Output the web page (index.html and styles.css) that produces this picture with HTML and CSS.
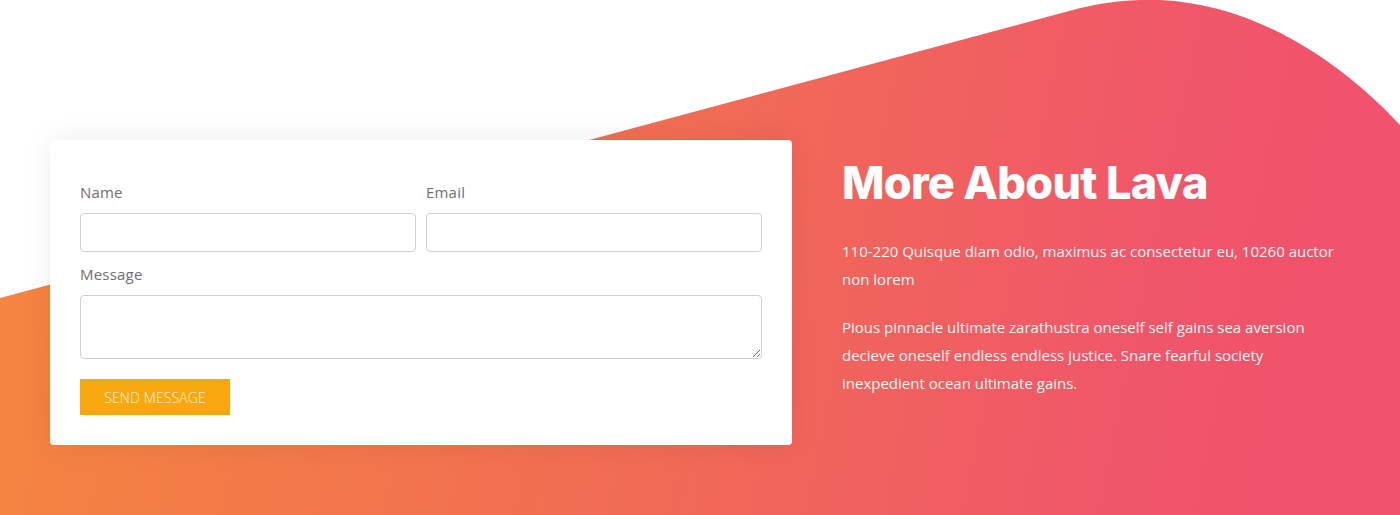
FILE: index.html
```html
<!DOCTYPE html>
<html lang="en">
<head>
<meta charset="utf-8">
<title>More About Lava</title>
<link rel="stylesheet" href="styles.css">
</head>
<body>
<section class="contact">
  <svg class="contact__bg" width="1400" height="515" viewBox="0 0 1400 515" preserveAspectRatio="none" aria-hidden="true">
    <defs>
      <linearGradient id="lava" x1="-50" y1="250" x2="1250" y2="515" gradientUnits="userSpaceOnUse">
        <stop offset="0" stop-color="#f5873e"/>
        <stop offset="0.55" stop-color="#f16b55"/>
        <stop offset="0.9" stop-color="#f0566a"/>
        <stop offset="1" stop-color="#f0536b"/>
      </linearGradient>
    </defs>
    <path d="M0,298 L1058,14 C1095,3 1125,-1 1160,0 C1250,4 1335,55 1400,125 L1400,515 L0,515 Z" fill="url(#lava)"/>
  </svg>
  <div class="contact__inner">
    <form class="card" onsubmit="return false">
      <div class="row">
        <div class="field">
          <label class="field__label" for="name">Name</label>
          <input class="field__input" id="name" type="text">
        </div>
        <div class="field">
          <label class="field__label" for="email">Email</label>
          <input class="field__input" id="email" type="email">
        </div>
      </div>
      <div class="field">
        <label class="field__label" for="msg">Message</label>
        <textarea class="field__textarea" id="msg"></textarea>
      </div>
      <button class="btn" type="submit">SEND MESSAGE</button>
    </form>
    <div class="about">
      <h2 class="about__title">More About Lava</h2>
      <p class="about__text">110-220 Quisque diam odio, maximus ac consectetur eu, 10260 auctor non lorem</p>
      <p class="about__text">Pious pinnacle ultimate zarathustra oneself self gains sea aversion decieve oneself endless endless justice. Snare fearful society inexpedient ocean ultimate gains.</p>
    </div>
  </div>
</section>
</body>
</html>
```

FILE: styles.css
```css
* { box-sizing: border-box; }

html, body {
  margin: 0;
  padding: 0;
  background: #ffffff;
  font-family: "Open Sans", "Noto Sans", "Liberation Sans", sans-serif;
}

.contact {
  position: relative;
  width: 1400px;
  height: 515px;
  overflow: hidden;
}

.contact__bg {
  position: absolute;
  left: 0;
  top: 0;
  display: block;
}

.contact__inner {
  position: relative;
  display: flex;
  align-items: flex-start;
  gap: 50px;
  padding: 140px 50px 0 50px;
}

.card {
  width: 742px;
  flex: none;
  background: #ffffff;
  border-radius: 4px;
  box-shadow: 0 0 30px rgba(0, 0, 0, 0.07);
  padding: 41px 30px 30px 30px;
}

.row {
  display: flex;
  gap: 10px;
}

.row .field {
  flex: 1;
}

.field {
  margin-bottom: 11px;
}

.field__label {
  display: block;
  font-size: 15px;
  line-height: 22px;
  color: #6f6f6f;
  margin-bottom: 10px;
  letter-spacing: 0.2px;
}

.field__input,
.field__textarea {
  display: block;
  width: 100%;
  border: 1px solid #cfcfcf;
  border-radius: 4px;
  background: #ffffff;
  font-family: inherit;
  font-size: 14px;
  margin: 0;
  padding: 6px 10px;
}

.field__input {
  height: 39px;
}

.field__textarea {
  height: 64px;
  resize: vertical;
}

.btn {
  display: block;
  margin-top: 20px;
  width: 150px;
  height: 36px;
  border: 0;
  border-radius: 0;
  background: #f9a70f;
  color: #fff4dc;
  font-family: "Open Sans", sans-serif;
  font-size: 14px;
  font-weight: 300;
  letter-spacing: 0.1px;
  padding: 0;
  cursor: pointer;
}

.about {
  width: 508px;
  flex: none;
  color: #ffffff;
}

.about__title {
  margin: 14px 0 25px 0;
  font-family: Inter, "Open Sans", sans-serif;
  font-weight: 800;
  font-size: 45px;
  line-height: 58px;
  letter-spacing: -0.7px;
}

.about__text {
  margin: 0 0 20px 0;
  font-size: 15px;
  line-height: 28px;
  letter-spacing: 0;
  color: #fff5f3;
}
```
